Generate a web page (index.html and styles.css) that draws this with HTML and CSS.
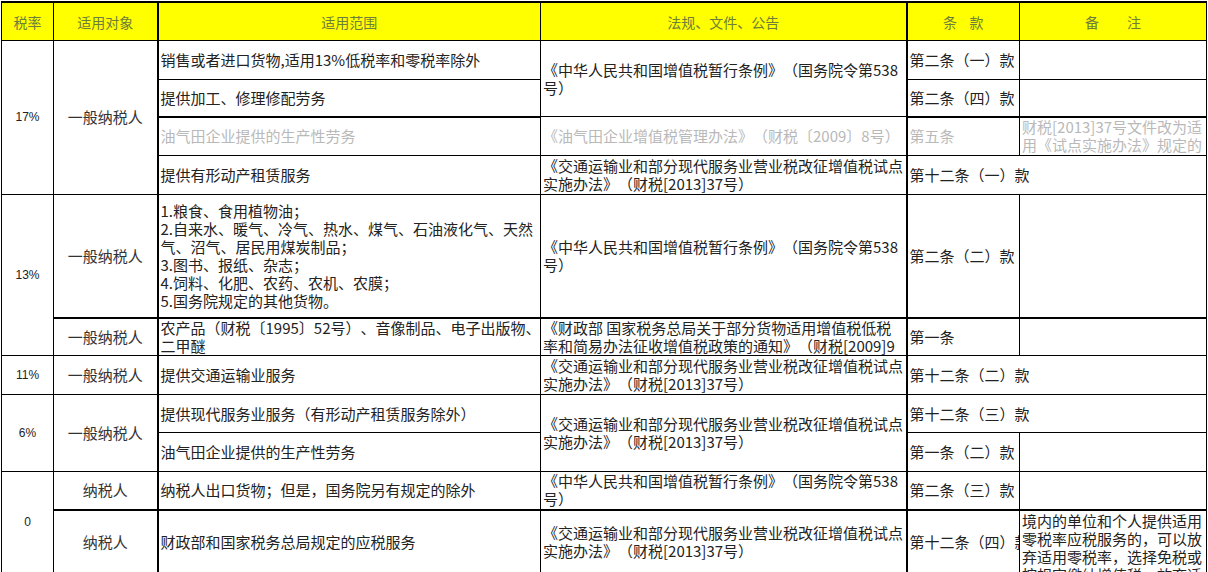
FILE: index.html
```html
<!DOCTYPE html>
<html lang="zh-CN">
<head>
<meta charset="utf-8">
<title>增值税税率表</title>
<link rel="stylesheet" href="styles.css">
</head>
<body>
<table class="sheet">
  <colgroup>
    <col class="c1"><col class="c2"><col class="c3"><col class="c4"><col class="c5"><col class="c6">
  </colgroup>
  <tr class="hd">
    <th>税率</th>
    <th>适用对象</th>
    <th class="kl">适用范围</th>
    <th>法规、文件、公告</th>
    <th class="kl">条&nbsp;&nbsp;&nbsp;&nbsp;款</th>
    <th>备&nbsp;&nbsp;&nbsp;&nbsp;&nbsp;&nbsp;&nbsp;&nbsp;&nbsp;注</th>
  </tr>
  <tr class="h39">
    <td rowspan="4" class="rate">17%</td>
    <td rowspan="4" class="obj">一般纳税人</td>
    <td class="txt kl">销售或者进口货物,适用13%低税率和零税率除外</td>
    <td rowspan="2" class="txt">《中华人民共和国增值税暂行条例》（国务院令第538<br>号）</td>
    <td class="txt kl">第二条（一）款</td>
    <td></td>
  </tr>
  <tr class="h37 thickb">
    <td class="txt kl">提供加工、修理修配劳务</td>
    <td class="txt kl">第二条（四）款</td>
    <td></td>
  </tr>
  <tr class="h37 grey">
    <td class="txt kl">油气田企业提供的生产性劳务</td>
    <td class="txt">《油气田企业增值税管理办法》（财税〔2009〕8号）</td>
    <td class="txt kl">第五条</td>
    <td class="txt top"><div class="clip38">财税[2013]37号文件改为适<br>用《试点实施办法》规定的</div></td>
  </tr>
  <tr class="h39">
    <td class="txt kl">提供有形动产租赁服务</td>
    <td class="txt">《交通运输业和部分现代服务业营业税改征增值税试点<br>实施办法》（财税[2013]37号）</td>
    <td colspan="2" class="txt kl">第十二条（一）款</td>
  </tr>
  <tr class="h124">
    <td rowspan="2" class="rate">13%</td>
    <td class="obj">一般纳税人</td>
    <td class="txt kl">1.粮食、食用植物油；<br>2.自来水、暖气、冷气、热水、煤气、石油液化气、天然<br>气、沼气、居民用煤炭制品；<br>3.图书、报纸、杂志；<br>4.饲料、化肥、农药、农机、农膜；<br>5.国务院规定的其他货物。</td>
    <td class="txt">《中华人民共和国增值税暂行条例》（国务院令第538<br>号）</td>
    <td class="txt kl">第二条（二）款</td>
    <td></td>
  </tr>
  <tr class="h37 thickt">
    <td class="obj">一般纳税人</td>
    <td class="txt kl">农产品（财税〔1995〕52号）、音像制品、电子出版物、<br>二甲醚</td>
    <td class="txt"><div class="clip37">《财政部 国家税务总局关于部分货物适用增值税低税<br>率和简易办法征收增值税政策的通知》（财税[2009]9<br>号）</div></td>
    <td class="txt kl">第一条</td>
    <td></td>
  </tr>
  <tr class="h39">
    <td class="rate">11%</td>
    <td class="obj">一般纳税人</td>
    <td class="txt kl">提供交通运输业服务</td>
    <td class="txt">《交通运输业和部分现代服务业营业税改征增值税试点<br>实施办法》（财税[2013]37号）</td>
    <td colspan="2" class="txt kl">第十二条（二）款</td>
  </tr>
  <tr class="h38">
    <td rowspan="2" class="rate">6%</td>
    <td rowspan="2" class="obj">一般纳税人</td>
    <td class="txt kl">提供现代服务业服务（有形动产租赁服务除外）</td>
    <td rowspan="2" class="txt">《交通运输业和部分现代服务业营业税改征增值税试点<br>实施办法》（财税[2013]37号）</td>
    <td colspan="2" class="txt kl">第十二条（三）款</td>
  </tr>
  <tr class="h39">
    <td class="txt kl">油气田企业提供的生产性劳务</td>
    <td class="txt kl">第一条（二）款</td>
    <td></td>
  </tr>
  <tr class="h38">
    <td rowspan="2" class="rate">0</td>
    <td class="obj">纳税人</td>
    <td class="txt kl">纳税人出口货物；但是，国务院另有规定的除外</td>
    <td class="txt">《中华人民共和国增值税暂行条例》（国务院令第538<br>号）</td>
    <td class="txt kl">第二条（三）款</td>
    <td></td>
  </tr>
  <tr class="h62 thickt">
    <td class="obj">纳税人</td>
    <td class="txt kl">财政部和国家税务总局规定的应税服务</td>
    <td class="txt">《交通运输业和部分现代服务业营业税改征增值税试点<br>实施办法》（财税[2013]37号）</td>
    <td class="txt kl">第十二条（四）款</td>
    <td class="txt top"><div class="clip62">境内的单位和个人提供适用<br>零税率应税服务的，可以放<br>弃适用零税率，选择免税或<br>按规定缴纳增值税。放弃适</div></td>
  </tr>
</table>
</body>
</html>
```

FILE: styles.css
```css
html, body {
  margin: 0;
  padding: 0;
  background: #ffffff;
}

body {
  padding: 1px 0 0 1px;
  font-family: "Noto Sans CJK SC", "Noto Sans", sans-serif;
  color: #222222;
  text-spacing-trim: space-all;
}

.sheet {
  border-collapse: collapse;
  table-layout: fixed;
  width: 1205px;
  font-size: 15px;
  line-height: 18px;
  border-top: 2px solid #000;
}

.c1 { width: 52px; }
.c2 { width: 104px; }
.c3 { width: 383px; }
.c4 { width: 366px; }
.c5 { width: 113px; }
.c6 { width: 187px; }

.sheet th,
.sheet td {
  border: 1px solid #000;
  padding: 0 2px;
  overflow: hidden;
  white-space: nowrap;
  vertical-align: middle;
}

.hd th {
  height: 37px;
  background: #ffff00;
  color: #6d7d3a;
  font-weight: normal;
  font-size: 14px;
  text-align: center;
}

.h37 { height: 37px; }
.h38 { height: 38px; }
.h39 { height: 39px; }
.h62 { height: 62px; }
.h124 { height: 124px; }

.rate {
  text-align: center;
  font-family: "Liberation Sans", Arial, sans-serif;
  font-size: 12px;
}

.obj {
  text-align: center;
  color: #333;
}

.txt {
  text-align: left;
}

.top {
  vertical-align: top;
}

.clip37 {
  height: 36px;
  overflow: hidden;
}

.clip38 {
  height: 37px;
  overflow: hidden;
}

.clip62 {
  height: 61px;
  padding-top: 1px;
  overflow: hidden;
}

.grey td {
  color: #b9b9b9;
}

.thickb td {
  border-bottom: 2px solid #000;
}

.thickt td {
  border-top: 2px solid #000;
}

.sheet .kl {
  border-left: 2px solid #000;
}
```
